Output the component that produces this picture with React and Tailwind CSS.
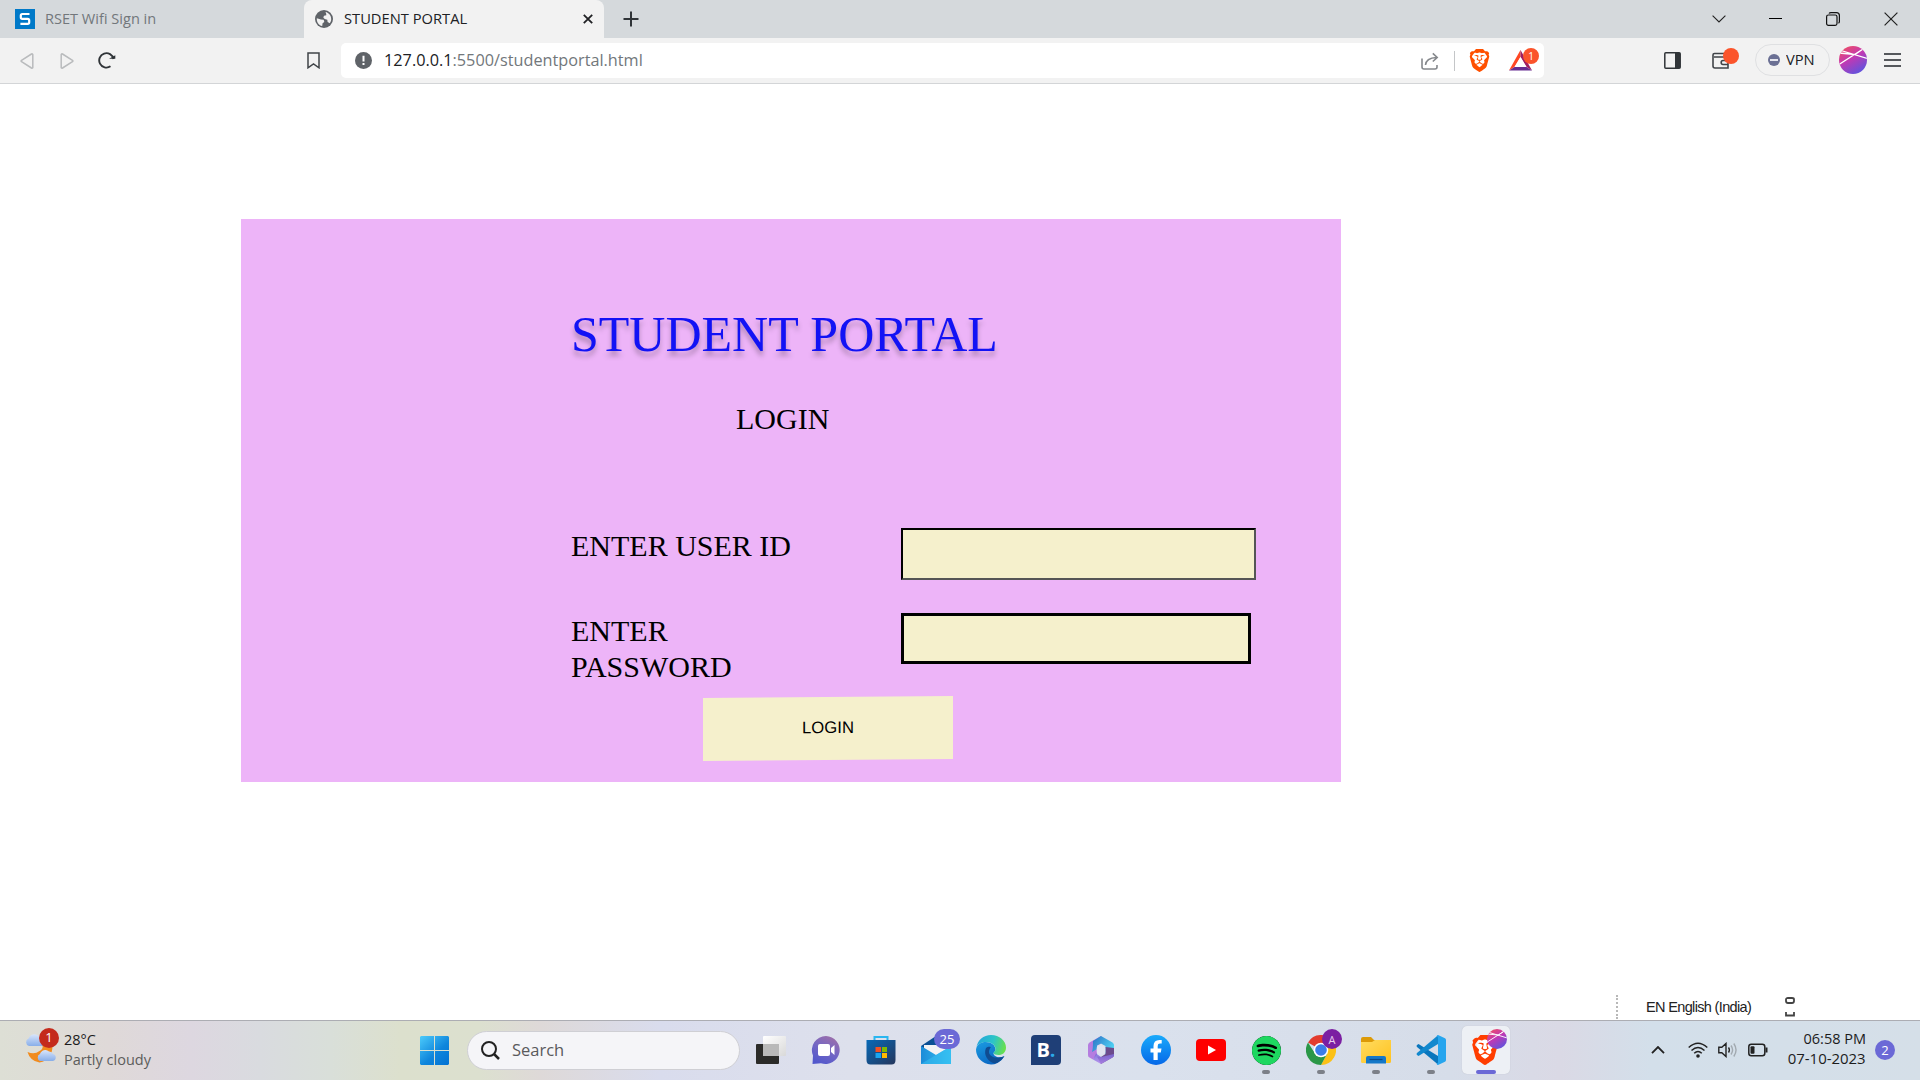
import React from "react";
import { SiBrave, SiSpotify } from "react-icons/si";

const UI = "font-['Open_Sans','Noto_Sans',sans-serif]";

const Lion = ({ size, color, className }) => (
  <div className={"relative flex items-center justify-center " + className}>
    <div className="absolute h-[72%] w-[64%] rounded-[35%] bg-white" />
    <SiBrave size={size} color={color} className="relative shrink-0" />
  </div>
);

const Avatar = ({ className, id }) => (
  <svg viewBox="0 0 28 28" className={className}>
    <defs>
      <linearGradient id={id} x1="0.15" y1="0" x2="0.75" y2="1">
        <stop offset="0" stopColor="#f04f61" />
        <stop offset="0.45" stopColor="#c238b3" />
        <stop offset="1" stopColor="#5a55e0" />
      </linearGradient>
      <clipPath id={id + "c"}><circle cx="14" cy="14" r="14" /></clipPath>
    </defs>
    <circle cx="14" cy="14" r="14" fill={`url(#${id})`} />
    <g clipPath={`url(#${id}c)`} stroke="#fff" strokeWidth="1.3" fill="none">
      <path d="M0 18.500 24 3M2 4.500 28 12.500M0 7 16 8.500 24 3" />
    </g>
  </svg>
);

const TabBar = () => (
  <div className="flex h-[38px] bg-[#d5d9dc] text-[14px] text-[#202124]">
    <div className="flex w-[304px] items-center pl-[15px] text-[#72777b]">
      <svg viewBox="0 0 20 20" className="h-5 w-5">
        <rect width="20" height="20" fill="#0079c8" />
        <path d="M14.500 5H7.300Q5.800 5 5.800 6.500V8.300Q5.800 9.900 7.300 9.900H12.700Q14.200 9.900 14.200 11.400V13.200Q14.200 14.800 12.700 14.800H5.400" fill="none" stroke="#fff" strokeWidth="2.200" />
      </svg>
      <span className="mb-[2px] ml-[10px] inline-block origin-left scale-x-[1.04]">RSET Wifi Sign in</span>
    </div>
    <div className="flex w-[300px] items-center rounded-t-[8px] bg-[#f2f2f2] pl-[11px]">
      <svg viewBox="0 0 18 18" className="h-[18px] w-[18px]">
        <circle cx="9" cy="9" r="9" fill="#5f6368" />
        <path fill="#f2f2f2" d="M1.800 8.200 6 9.500 8.700 9.800 9.300 12 7.600 13.300 7.200 16.100C3.500 15.300 1.600 12 1.800 8.200zM10.500 1.900C14 2.600 16.200 5.500 16.200 9c0 1.600-.5 3-1.400 4.200L12.600 12l-.3-2.300-2.600-.6-1.400-1.500L9 5.800l2.300-.5-.1-1.600z" />
      </svg>
      <span className="mb-[2px] ml-[11px] inline-block w-[124px] origin-left scale-x-[1.05] whitespace-nowrap">STUDENT PORTAL</span>
      <svg viewBox="0 0 10 10" className="ml-[115px] h-[10px] w-[10px]" stroke="#202124" strokeWidth="1.800"><path d="M.8.8 9.200 9.200M9.200.8.8 9.200" /></svg>
    </div>
    <svg viewBox="0 0 16 16" className="mt-[11px] ml-[19px] h-4 w-4" stroke="#303438" strokeWidth="2"><path d="M8 .5v15M.5 8h15" /></svg>
    <div className="ml-auto flex items-center pr-[22px] pb-px">
      <svg viewBox="0 0 14 8" className="h-2 w-[14px]" fill="none" stroke="#222" strokeWidth="1.100"><path d="m.6.6 6.400 6.400L13.400.6" /></svg>
      <div className="ml-[43px] h-px w-[13px] bg-black" />
      <svg viewBox="0 0 14 14" className="ml-11 h-[14px] w-[14px]" fill="none" stroke="#111" strokeWidth="1.200"><rect x=".6" y="3" width="10.400" height="10.400" rx="1.800" /><path d="M3 1.500Q3.600.6 5 .6h5.400Q13.400.6 13.400 3.600V9.500q0 1-.9 1.700" /></svg>
      <svg viewBox="0 0 14 14" className="ml-11 h-[14px] w-[14px]" stroke="#222" strokeWidth="1.200"><path d="m.6.6 12.800 12.800M13.400.6.6 13.400" /></svg>
    </div>
  </div>
);

const Toolbar = () => (
  <div className="flex h-[46px] items-center border-b border-[#d3d5d7] bg-[#f2f2f2]">
    <svg viewBox="0 0 14 16" className="ml-[20px] h-4 w-[14px]" fill="none" stroke="#b9bbbd" strokeWidth="1.500" strokeLinejoin="round"><path d="M12.800 1.500v13Q12.500 15.500 11.500 15L1.500 8.700Q.7 8 1.500 7.300L11.500 1Q12.500.5 12.800 1.500z" /></svg>
    <svg viewBox="0 0 14 16" className="ml-[26px] h-4 w-[14px]" fill="none" stroke="#b9bbbd" strokeWidth="1.500" strokeLinejoin="round"><path d="M1.200 1.500v13Q1.500 15.500 2.500 15L12.500 8.700Q13.300 8 12.500 7.300L2.500 1Q1.500.5 1.200 1.500z" /></svg>
    <svg viewBox="0 0 18 17" className="mb-px ml-[24px] h-[17px] w-[18px]" fill="none" stroke="#303438" strokeWidth="1.900"><path d="M12.500 14.300A7.200 7.200 0 1 1 15.500 7" /><path d="M11 6.800h6.300V3.200z" fill="#303438" stroke="none" /></svg>
    <svg viewBox="0 0 13 17" className="mb-px ml-[191px] h-[17px] w-[13px]" fill="none" stroke="#404448" strokeWidth="1.500"><path d="M1 1h11v14.800L6.500 12 1 15.800z" /></svg>
    <div className="ml-[21px] flex h-[35px] w-[1203px] items-center rounded-[5px] bg-white pl-[14px]">
      <svg viewBox="0 0 17 17" className="h-[17px] w-[17px]"><circle cx="8.500" cy="8.500" r="8.500" fill="#5f6368" /><path d="M8.500 3.800v5.800M8.500 11.100v2" stroke="#fff" strokeWidth="2" /></svg>
      <span className="mb-px ml-[12px] inline-block w-[260px] origin-left scale-x-[0.956] text-[17px] whitespace-nowrap text-[#72777b]"><span className="text-[#202124]">127.0.0.1</span>:5500/studentportal.html</span>
      <div className="ml-auto flex h-full items-center pr-[12px]">
        <svg viewBox="0 0 18 18" className="h-[18px] w-[18px]" fill="none" stroke="#85888c" strokeWidth="1.600"><path d="M1 6.500V15q0 2 2 2H14q2 0 2-2v-2M4.500 13Q5 6 15.500 5.500M11.800 1.300l4.400 4.200-4.400 4" /></svg>
        <div className="ml-[15px] h-5 w-px bg-[#c4c6c8]" />
        <Lion size={23} color="#ff5000" className="ml-[14px] h-[23px] w-[20px]" />
        <div className="relative ml-[20px] h-[22px] w-[23px]">
          <svg viewBox="0 0 23 22" className="h-[22px] w-[23px]"><path fill="#ff4724" d="M11.500 0v7L5.500 17 0 20.500z" /><path fill="#9e1f63" d="M11.500 0v7l6 10 5.500 3.500z" /><path fill="#662d91" d="M0 20.500 5.500 17h12l5.500 3.500z" /><path fill="#fff" d="m11.500 7 6 10h-12z" /></svg>
          <div className="absolute top-[-2px] left-[14px] flex h-4 w-4 items-center justify-center rounded-full bg-[#fb542b] text-[10px] leading-none text-white">1</div>
        </div>
      </div>
    </div>
    <div className="ml-auto flex items-center pr-[19px] pb-px">
      <svg viewBox="0 0 17 17" className="h-[17px] w-[17px]"><rect x=".8" y=".8" width="15.400" height="15.400" rx="1" fill="none" stroke="#303438" strokeWidth="1.500" /><path d="M11 1h5v15h-5z" fill="#303438" /></svg>
      <div className="relative ml-[31px] h-[17px] w-[18px]">
        <svg viewBox="0 0 18 17" className="h-[17px] w-[18px]" fill="none" stroke="#404448" strokeWidth="1.600"><path d="M16 4V1.500H2.500Q1 1.500 1 3V14q0 2 2 2H16V5H2M16 8.500H11q-1.800 0-1.800 2t1.800 2h5" /></svg>
        <div className="absolute top-[-4px] left-[11px] h-4 w-4 rounded-full bg-[#fb542b]" />
      </div>
      <div className="ml-[25px] flex h-8 w-[75px] items-center rounded-full border border-[#dfe0e2] pl-[12px]">
        <div className="flex h-3 w-3 items-center justify-center rounded-full bg-[#6b7094]"><div className="h-[2px] w-2 bg-[#e5e6ee]" /></div>
        <span className="mb-px ml-[6px] origin-left scale-x-[1.05] text-[14px] text-[#202124]">VPN</span>
      </div>
      <Avatar id="avBar" className="ml-[9px] h-7 w-7" />
      <div className="ml-[17px] flex w-[17px] flex-col gap-[4px]"><div className="h-[2px] bg-[#55585c]" /><div className="h-[2px] bg-[#55585c]" /><div className="h-[2px] bg-[#55585c]" /></div>
    </div>
  </div>
);

const Portal = () => (
  <main className="h-[563px] w-[1100px] bg-[#edb4f8] pl-[330px] font-['Liberation_Serif','Times_New_Roman',serif] text-[30px] leading-[36px] text-black">
    <h1 className="pt-[87px] text-[50px] leading-[57px] whitespace-nowrap text-[#1212f5] [text-shadow:0_5px_5px_rgba(0,0,0,0.25)]">STUDENT PORTAL</h1>
    <h2 className="mt-[38px] ml-[165px]">LOGIN</h2>
    <div className="mt-[91px] flex h-[85px]">
      <label className="w-[330px]">ENTER USER ID</label>
      <input className="h-[52px] w-[355px] border-2 border-t-black border-r-[#555] border-b-[#555] border-l-black bg-[#f5f0cc]" />
    </div>
    <div className="flex h-[84px]">
      <label className="w-[330px]">ENTER<br />PASSWORD</label>
      <input className="h-[51px] w-[350px] border-[3px] border-black bg-[#f5f0cc]" />
    </div>
    <button className="ml-[132px] block h-[63px] w-[250px] skew-y-[-0.45deg] bg-[#f5f0cc] pb-px font-['Liberation_Sans',Arial,sans-serif] text-[16.67px]">LOGIN</button>
  </main>
);

const Slot = ({ children, dot, active }) => (
  <div className={"relative flex h-12 w-12 items-center justify-center rounded-[5px] " + (active ? "bg-[#edf0f5] shadow-[0_0_1px_#b5b8c0]" : "")}>
    {children}
    {dot && <div className="absolute bottom-0 left-5 h-1 w-2 rounded-full bg-[#7c8088]" />}
    {active && <div className="absolute bottom-0 left-[14px] h-1 w-5 rounded-full bg-[#6b69d6]" />}
  </div>
);

const Apps = () => (
  <div className="flex gap-[7px]">
    <Slot><svg viewBox="0 0 30 28" className="h-7 w-[30px]">
      <defs><linearGradient id="tv" x2="1" y2="1"><stop stopColor="#fff" /><stop offset="1" stopColor="#d9d9d9" /></linearGradient></defs>
      <rect x="0" y="8" width="23" height="20" rx="1" fill="#2b2b29" /><rect x="7" y="0" width="23" height="20" rx="1" fill="url(#tv)" /><path d="M7 8h16v12H7z" fill="#b9b9b9" />
    </svg></Slot>
    <Slot><svg viewBox="0 0 30 30" className="h-[30px] w-[30px]">
      <defs><linearGradient id="chat" x1=".8" y1="0" x2=".3" y2="1"><stop stopColor="#a06fa8" /><stop offset=".5" stopColor="#7467c4" /><stop offset="1" stopColor="#5258cc" /></linearGradient></defs>
      <path fill="url(#chat)" d="M15 1a14 14 0 1 1-5 27.200L1.500 29 2 20.500A14 14 0 0 1 15 1z" /><rect x="7" y="9" width="12" height="12" rx="2" fill="#fff" /><path d="m20 13 3.500-3v10L20 17z" fill="#fff" />
    </svg></Slot>
    <Slot><svg viewBox="0 0 30 30" className="h-[30px] w-[30px]">
      <defs><linearGradient id="store" x2="1" y2="1"><stop stopColor="#0669b7" /><stop offset="1" stopColor="#25365c" /></linearGradient></defs>
      <path d="M8.500 8V2h13v6" fill="none" stroke="#29b6f0" strokeWidth="2" /><path d="M.5 5h29v20q0 4.500-4 4.500h-21q-4 0-4-4.500z" fill="url(#store)" />
      <path fill="#f25022" d="M9.500 12H15v5H9.500z" /><path fill="#7fba00" d="M16 12h5v5h-5z" /><path fill="#19a5ef" d="M9.500 18H15v5H9.500z" /><path fill="#ffb900" d="M16 18h5v5h-5z" />
    </svg></Slot>
    <Slot><svg viewBox="0 0 30 28" className="h-7 w-[30px]">
      <defs><linearGradient id="mail" x2="1"><stop stopColor="#1b8bd8" /><stop offset="1" stopColor="#38c4f4" /></linearGradient></defs>
      <path d="M0 10 15 0l15 10v4H0z" fill="#0b4f94" /><path d="M3 9h24v7l-12 8L3 15z" fill="#f2f2f4" /><path d="M0 10l15 9 15-9v18H0z" fill="url(#mail)" /><path d="m0 28 15-9L30 10v18z" fill="#36bdf0" opacity=".6" />
    </svg>
      <div className="absolute top-[3px] left-[22px] flex h-5 w-[26px] items-center justify-center rounded-full bg-[#6b69d6] text-[13px] leading-none text-white">25</div>
    </Slot>
    <Slot><svg viewBox="0 0 30 30" className="h-[30px] w-[30px]">
      <defs><linearGradient id="edA" x1="0" y1=".3" x2="1" y2=".5"><stop stopColor="#24a5dc" /><stop offset=".55" stopColor="#2cc4c8" /><stop offset="1" stopColor="#69e04c" /></linearGradient>
        <linearGradient id="edB" x2=".6" y2="1"><stop stopColor="#1b9de2" /><stop offset="1" stopColor="#0a65c2" /></linearGradient></defs>
      <path fill="url(#edB)" d="M0 14.500C1 9 5 7 9.500 7c6 0 10 3.500 10 7.500 0 1-1 2.500-2 3.500 0 4 6 5.500 11 3A15 15 0 0 1 0 14.500z" />
      <path fill="#104c91" d="M10 13c-3 7 2 14 9 15.500 4-1 7-3.500 9.300-7.200-5 2.500-15 2-15.300-4.300C13 14 15 12 15 12s-3-1-5 1z" />
      <path fill="url(#edA)" d="M.3 13C1.500 5 7.500 0 15 0c8.500 0 15 6 15 12.500 0 5-3.500 7.500-7.500 7.500-3 0-5-1-5-2s2-1.500 2-4c0-4-4.500-7-9-7C5 7 1 9.500.3 13z" />
    </svg></Slot>
    <Slot><div className="flex h-[30px] w-[30px] items-center justify-center rounded-[4px] rounded-bl-none bg-[#1f3f77] font-['Open_Sans'] text-[20px] leading-none font-bold text-white">B<span className="text-[#2ba9e8]">.</span></div></Slot>
    <Slot><svg viewBox="0 0 26 28" className="h-7 w-[26px]">
      <defs><linearGradient id="mA" x2="0" y2="1"><stop stopColor="#7668d8" /><stop offset="1" stopColor="#b388ee" /></linearGradient><linearGradient id="mB" x2="1" y2=".6"><stop stopColor="#2a6fc4" /><stop offset="1" stopColor="#50d5f5" /></linearGradient></defs>
      <path fill="#b57de0" d="M13 0 1.500 6.500Q0 7.500 0 9v10q0 2 1.500 2.500L5 23.500l4-5V9.500l6-3z" />
      <path fill="url(#mB)" d="M13 0 5 5q0 8-1 11l5-3V9.500l4-2 4.500 2.500v9l8.500-1V9q0-1.500-1.500-2.500z" />
      <path fill="#6c4b8c" d="M26 12v7q0 1.500-1.500 2.500L13 28l-4-7.500 4 .5 4.500-3V11z" /><path fill="url(#mA)" d="M26 18v1q0 1.500-1.500 2.500L13 28 5 23.500l3-6 5 3.500z" opacity=".85" />
      <path fill="#e1e4f0" d="m13 9 4.300 2.500v5L13 19l-4.300-2.500v-5z" />
    </svg></Slot>
    <Slot><svg viewBox="0 0 30 30" className="h-[30px] w-[30px]">
      <defs><linearGradient id="fb" x2="0" y2="1"><stop stopColor="#19aafb" /><stop offset="1" stopColor="#0668e8" /></linearGradient></defs>
      <circle cx="15" cy="15" r="15" fill="url(#fb)" /><path fill="#fff" d="M12.500 25V17.500H9.500V13.500h3V11q0-6 6-6h2.200v3.600h-1.700q-2.300 0-2.300 2.300v2.600h3.800l-.7 4h-3.100V25z" />
    </svg></Slot>
    <Slot><svg viewBox="0 0 30 22" className="h-[22px] w-[30px]"><rect width="30" height="22" rx="4" fill="#f00" /><path d="m12 6.500 8 4.500-8 4.500z" fill="#fff" /></svg></Slot>
    <Slot dot><span className="flex h-[29px] w-[29px] items-center justify-center rounded-full bg-black"><SiSpotify size={29} color="#1ed760" /></span></Slot>
    <Slot dot><svg viewBox="0 0 30 30" className="h-[30px] w-[30px]">
      <path d="M15 15 2 7.500A15 15 0 0 1 28 7.500L15 8z" fill="#e33b2e" /><path d="M15 15 28 7.500A15 15 0 0 1 15 30l6-11z" fill="#fbc116" /><path d="M2 7.500A15 15 0 0 0 15 30l6-11-12-.5z" fill="#2a9747" /><circle cx="15" cy="15" r="7.300" fill="#fff" /><circle cx="15" cy="15" r="5.800" fill="#3b7de9" />
    </svg><div className="absolute top-[3px] left-[25px] flex h-5 w-5 items-center justify-center rounded-full bg-[#7b1fa2] text-[11px] leading-none text-[#e6cdee]">A</div></Slot>
    <Slot dot><svg viewBox="0 0 30 27" className="h-[27px] w-[30px]">
      <defs><linearGradient id="fold" x2="1" y2="1"><stop stopColor="#ffdc60" /><stop offset="1" stopColor="#ffc21f" /></linearGradient></defs>
      <path d="M0 2q0-2 2-2h8l3 3h15q2 0 2 2v5H0z" fill="#dc9a08" /><path d="M0 5h11l3-2h16v21.500q0 1.500-1.500 1.500H1.500Q0 26 0 24.500z" fill="url(#fold)" /><path d="M5 26.500V21q0-2 2-2h16q2 0 2 2v5.500z" fill="#1578c8" /><path d="M8.500 22.500h13" stroke="#0b4a88" strokeWidth="1.200" />
    </svg></Slot>
    <Slot dot><svg viewBox="0 0 30 30" className="h-[30px] w-[30px]">
      <path fill="#0a76bd" d="M2.500 9 1 10q-1 1 0 2l21 17.500V21z" /><path fill="#1188ce" d="M2.500 21 1 20q-1-1 0-2L22 .3V9z" /><path fill="#26a5ee" d="M22 0l7 3.300q1 .6 1 1.700v20q0 1.100-1 1.700L22 30q-1 0-1.500-1.500 1.500.5 1.500-1.500V3q0-2-1.500-1.500Q21 0 22 0z" />
    </svg></Slot>
    <Slot active><Lion size={30} color="#ff3d00" className="mr-[2px] h-[30px] w-[25px]" /><Avatar id="avTask" className="absolute top-[3px] left-[25px] h-5 w-5" /></Slot>
  </div>
);

const Taskbar = () => (
  <footer className="flex h-[60px] items-center border-t border-[#acadb3] bg-[linear-gradient(90deg,#dddfd5_0,#dfd9d8_110px,#ddd7e0_190px,#d9dbdf_260px,#d9dfd9_330px,#dce0cd_400px,#dce0cf_480px,#ded9d8_540px,#d9dced_660px,#dde0ec_850px,#dae1ed_1150px,#d6dde9_1450px,#dad9e5_1560px,#d3dfea_1650px,#d5dfe8_1920px)] pb-px">
    <div className="flex w-[420px] items-center pl-[25px]">
      <div className="relative mb-[9px] h-9 w-[34px]">
        <svg viewBox="0 0 34 36" className="h-9 w-[34px]">
          <defs><linearGradient id="cl" x2="0" y2="1"><stop stopColor="#d8e5fb" /><stop offset="1" stopColor="#88aee9" /></linearGradient></defs>
          <path fill="url(#cl)" d="M4 18a4 4 0 0 1-.5-7.500 6 6 0 0 1 10-2.500 5 5 0 0 1 4 10z" /><path fill="#f18b1d" d="M2.500 24q7 3 12-1 4-2 3-6h10q0 15-13 17.500Q5 33 2.500 24z" /><path fill="url(#cl)" d="M15 33a3.800 3.800 0 0 1 0-7 5.500 5.500 0 0 1 9-2.500 4 4 0 0 1 4 2.500 3.600 3.600 0 0 1 0 7z" />
        </svg>
        <div className="absolute top-0 left-[14px] flex h-5 w-5 items-center justify-center rounded-full bg-[#c42b1c] text-[13px] leading-none text-white">1</div>
      </div>
      <div className="mb-px ml-[5px] text-[14.500px] leading-5"><div className="text-[#1c1c1c]">28°C</div><div className="text-[#5c5d5c]">Partly cloudy</div></div>
    </div>
    <svg viewBox="0 0 29 29" className="h-[29px] w-[29px]">
      <defs><linearGradient id="win" gradientUnits="userSpaceOnUse" x1="0" y1="0" x2="26" y2="29"><stop stopColor="#4ccbfb" /><stop offset=".6" stopColor="#0f86dc" /><stop offset="1" stopColor="#0474d4" /></linearGradient></defs>
      <path fill="url(#win)" d="M1 0h13v14H0V1zM15 0h13l1 1v13H15zM0 15h14v14H1l-1-1zM15 15h14v13l-1 1H15z" />
    </svg>
    <div className="ml-[18px] flex h-[39px] w-[273px] items-center rounded-full border border-[#cfcfd4] bg-[#f5f5f8] pl-[13px]">
      <svg viewBox="0 0 19 19" className="h-[19px] w-[19px]" fill="none" stroke="#222" strokeWidth="2"><circle cx="8" cy="8" r="7" /><path d="m13 13 5 5" strokeWidth="2.500" /></svg>
      <span className="ml-[12px] origin-left scale-x-[0.97] text-[17px] text-[#5a5a5c]">Search</span>
    </div>
    <div className="ml-[7px]"><Apps /></div>
    <div className="ml-auto flex items-center pr-[25px]">
      <svg viewBox="0 0 14 8" className="h-2 w-[14px]" fill="none" stroke="#222" strokeWidth="1.800"><path d="M1 7.200 7 1l6 6.200" /></svg>
      <svg viewBox="0 0 20 16" className="ml-[23px] h-4 w-5" fill="none" stroke="#222" strokeWidth="1.500"><path d="M.7 5.500q9.300-8.600 18.600 0M3.500 8.500q6.500-6 13 0M6.200 11.300q3.800-3.500 7.600 0" /><circle cx="10" cy="14" r="1.800" fill="#222" stroke="none" /></svg>
      <svg viewBox="0 0 20 16" className="ml-[10px] h-4 w-5" fill="none" stroke="#222" strokeWidth="1.400"><path d="M.8 5.300h3L8 1.500v13l-4.200-3.800h-3zM10.500 5.500q1.700 2.500 0 5" /><path d="M13 3.500q3.200 4.500 0 9M15.800 1.500q4.500 6.500 0 13" stroke="#a2a9b0" /></svg>
      <svg viewBox="0 0 20 14" className="ml-[10px] h-[14px] w-5" fill="none" stroke="#222" strokeWidth="1.500"><rect x=".8" y="1.300" width="16" height="11.400" rx="2.500" /><path d="M18.500 4.500v5" strokeWidth="2" /><rect x="2.500" y="3.300" width="4" height="7.400" rx="1" fill="#222" stroke="none" /></svg>
      <div className="mb-[2px] ml-[20px] flex w-[78px] flex-col items-end text-[14.500px] leading-5 whitespace-nowrap text-[#1c1c1c]"><div>06:58 PM</div><div className="origin-right scale-x-[1.03]">07-10-2023</div></div>
      <div className="ml-[9px] flex h-5 w-5 items-center justify-center rounded-full bg-[#6b69d6] text-[13px] leading-none text-white">2</div>
    </div>
  </footer>
);

export default function App() {
  return (
    <div className={"flex h-[1080px] w-[1920px] flex-col overflow-hidden bg-white " + UI}>
      <TabBar />
      <Toolbar />
      <div className="flex flex-1 flex-col justify-between pt-[135px]">
        <div className="pl-[241px]"><Portal /></div>
        <div className="flex h-[27px] items-center pl-[1616px] font-['Liberation_Sans',Arial,sans-serif] text-[14.500px] tracking-[-0.65px] text-[#222]">
          <div className="h-6 border-l-2 border-dotted border-[#b8b8b8]" />
          <span className="mt-[2px] ml-[28px] w-[110px] whitespace-nowrap">EN English (India)</span>
          <svg viewBox="0 0 10 20" className="ml-[29px] h-5 w-[10px]" fill="none" stroke="#444" strokeWidth="1.800"><path d="M1 4V2.500Q1 1 3 1h4q2 0 2 1.500V4q0 2-2 2H3Q1 6 1 4M1 15v3.500h8V15" /></svg>
        </div>
      </div>
      <Taskbar />
    </div>
  );
}
